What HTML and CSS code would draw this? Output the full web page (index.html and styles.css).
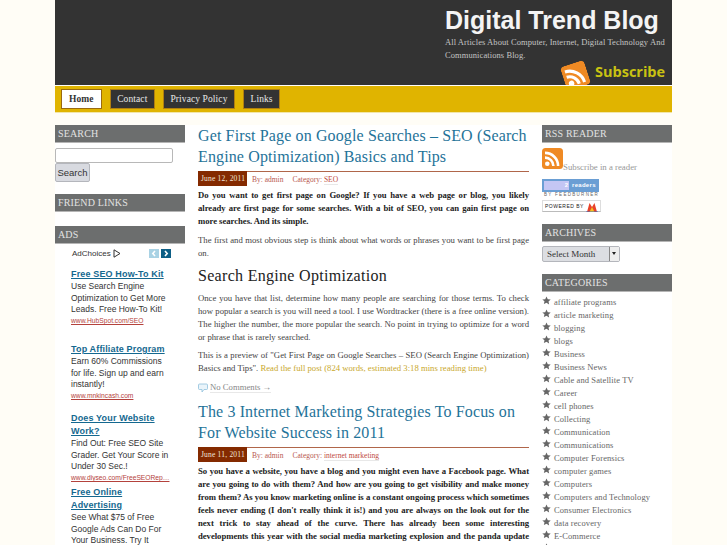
FILE: index.html
```html
<!DOCTYPE html>
<html lang="en">
<head>
<meta charset="utf-8">
<title>Digital Trend Blog</title>
<link rel="stylesheet" href="styles.css">
</head>
<body>
<svg class="defs" width="0" height="0" aria-hidden="true"><defs>
<symbol id="star" viewBox="0 0 12 12"><path d="M6 .6l1.7 3.600 3.900.5-2.900 2.700.8 3.900L6 8.900l-3.500 1.900.8-3.900L.4 4.700l3.900-.5z"/></symbol>
<symbol id="rss" viewBox="0 0 21 21"><rect width="21" height="21" rx="3.500" fill="#ef8a24"/><circle cx="5.300" cy="15.800" r="2.300" fill="#fff"/><path d="M3 9.600a8.400 8.400 0 0 1 8.400 8.400M3 4.900A13.100 13.100 0 0 1 16.100 18" fill="none" stroke="#fff" stroke-width="2.600"/></symbol>
</defs></svg>
<div class="page">
  <header class="masthead">
    <div class="brand">
      <h1 class="site-title">Digital Trend Blog</h1>
      <p class="tagline">All Articles About Computer, Internet, Digital Technology And Communications Blog.</p>
    </div>
    <div class="subscribe">
      <svg class="subscribe-icon" width="25" height="25"><use href="#rss"/></svg>
      <span class="subscribe-text">Subscribe</span>
    </div>
  </header>
  <nav class="nav">
    <a class="nav-item nav-active">Home</a>
    <a class="nav-item">Contact</a>
    <a class="nav-item">Privacy Policy</a>
    <a class="nav-item">Links</a>
  </nav>
  <div class="columns">
    <aside class="side">
      <h3 class="widget-title">SEARCH</h3>
      <div class="search">
        <input class="search-input" type="text" aria-label="Search">
        <button class="search-btn" type="button">Search</button>
      </div>
      <h3 class="widget-title friend">FRIEND LINKS</h3>
      <h3 class="widget-title ads-title">ADS</h3>
      <div class="ads">
        <div class="ad-head">
          <span class="adchoices">AdChoices</span>
          <svg class="ad-tri" width="8" height="9" viewBox="0 0 8 9"><path d="M1 .8l6 3.700-6 3.700z" fill="none" stroke="#333"/></svg>
          <span class="ad-arrows">
            <svg width="10" height="9" viewBox="0 0 10 9"><rect width="10" height="9" fill="#a9d2e4"/><path d="M6 2L3.800 4.500 6 7" fill="none" stroke="#fff" stroke-width="1.600"/></svg>
            <svg width="10" height="9" viewBox="0 0 10 9"><rect width="10" height="9" fill="#0d5f86"/><path d="M4 2l2.200 2.500L4 7" fill="none" stroke="#fff" stroke-width="1.600"/></svg>
          </span>
        </div>
        <div class="ad a1"><a class="ad-h">Free SEO How-To Kit</a><p class="ad-b">Use Search Engine Optimization to Get More Leads. Free How-To Kit!</p><a class="ad-u">www.HubSpot.com/SEO</a></div>
        <div class="ad a2"><a class="ad-h">Top Affiliate Program</a><p class="ad-b">Earn 60% Commissions for life. Sign up and earn instantly!</p><a class="ad-u">www.mnkincash.com</a></div>
        <div class="ad a3"><a class="ad-h">Does Your Website Work?</a><p class="ad-b">Find Out: Free SEO Site Grader. Get Your Score in Under 30 Sec.!</p><a class="ad-u">www.diyseo.com/FreeSEORep…</a></div>
        <div class="ad a4"><a class="ad-h">Free Online Advertising</a><p class="ad-b">See What $75 of Free Google Ads Can Do For Your Business. Try It</p></div>
      </div>
    </aside>
    <main class="main">
      <article class="post">
        <h2 class="post-title">Get First Page on Google Searches – SEO (Search Engine Optimization) Basics and Tips</h2>
        <div class="meta"><span class="date">June 12, 2011</span><span class="by">By: admin</span><span class="cat">Category: <a class="cat-link">SEO</a></span></div>
        <p class="para strong">Do you want to get first page on Google? If you have a web page or blog, you likely already are first page for some searches. With a bit of SEO, you can gain first page on more searches. And its simple.</p>
        <p class="para">The first and most obvious step is think about what words or phrases you want to be first page on.</p>
        <h3 class="sub">Search Engine Optimization</h3>
        <p class="para">Once you have that list, determine how many people are searching for those terms. To check how popular a search is you will need a tool. I use Wordtracker (there is a free online version). The higher the number, the more popular the search. No point in trying to optimize for a word or phrase that is rarely searched.</p>
        <p class="para">This is a preview of "Get First Page on Google Searches – SEO (Search Engine Optimization) Basics and Tips". <a class="more">Read the full post (824 words, estimated 3:18 mins reading time)</a></p>
        <div class="comments">
          <svg width="10" height="10" viewBox="0 0 10 10"><path d="M1.500 1h7a1 1 0 0 1 1 1v3.500a1 1 0 0 1-1 1H6L4 9V6.500H1.500a1 1 0 0 1-1-1V2a1 1 0 0 1 1-1z" fill="#eaf4fa" stroke="#8fc0dc" stroke-width=".8"/></svg>
          <a class="comment-link">No Comments →</a>
        </div>
      </article>
      <article class="post">
        <h2 class="post-title">The 3 Internet Marketing Strategies To Focus on For Website Success in 2011</h2>
        <div class="meta"><span class="date">June 11, 2011</span><span class="by">By: admin</span><span class="cat">Category: <a class="cat-link">internet marketing</a></span></div>
        <p class="para strong">So you have a website, you have a blog and you might even have a Facebook page. What are you going to do with them? And how are you going to get visibility and make money from them? As you know marketing online is a constant ongoing process which sometimes feels never ending (I don't really think it is!) and you are always on the look out for the next trick to stay ahead of the curve. There has already been some interesting developments this year with the social media marketing explosion and the panda update from Google which</p>
      </article>
    </main>
    <aside class="side">
      <h3 class="widget-title">RSS READER</h3>
      <div class="reader">
        <div class="reader-line"><svg width="21" height="21"><use href="#rss"/></svg><span class="reader-text">Subscribe in a reader</span></div>
        <div class="fb-count"><span class="fb-box">2</span><span class="fb-label">readers</span></div>
        <div class="fb-by">BY FEEDBURNER</div>
        <div class="powered"><span>POWERED BY</span>
          <svg width="12" height="11" viewBox="0 0 12 11"><path d="M1 11L3.500 2 6 6l2.500-4L11 11z" fill="#e8432a"/><path d="M3.500 11L6 6l2.500 5z" fill="#f4c21f"/><path d="M0 11h12" stroke="#3a6fc4"/></svg>
        </div>
      </div>
      <h3 class="widget-title">ARCHIVES</h3>
      <div class="archive"><span class="select"><span class="select-label">Select Month</span><span class="select-arrow"></span></span></div>
      <h3 class="widget-title">CATEGORIES</h3>
      <ul class="cats">
        <li><svg width="9" height="9"><use href="#star"/></svg>affiliate programs</li>
        <li><svg width="9" height="9"><use href="#star"/></svg>article marketing</li>
        <li><svg width="9" height="9"><use href="#star"/></svg>blogging</li>
        <li><svg width="9" height="9"><use href="#star"/></svg>blogs</li>
        <li><svg width="9" height="9"><use href="#star"/></svg>Business</li>
        <li><svg width="9" height="9"><use href="#star"/></svg>Business News</li>
        <li><svg width="9" height="9"><use href="#star"/></svg>Cable and Satellite TV</li>
        <li><svg width="9" height="9"><use href="#star"/></svg>Career</li>
        <li><svg width="9" height="9"><use href="#star"/></svg>cell phones</li>
        <li><svg width="9" height="9"><use href="#star"/></svg>Collecting</li>
        <li><svg width="9" height="9"><use href="#star"/></svg>Communication</li>
        <li><svg width="9" height="9"><use href="#star"/></svg>Communications</li>
        <li><svg width="9" height="9"><use href="#star"/></svg>Computer Forensics</li>
        <li><svg width="9" height="9"><use href="#star"/></svg>computer games</li>
        <li><svg width="9" height="9"><use href="#star"/></svg>Computers</li>
        <li><svg width="9" height="9"><use href="#star"/></svg>Computers and Technology</li>
        <li><svg width="9" height="9"><use href="#star"/></svg>Consumer Electronics</li>
        <li><svg width="9" height="9"><use href="#star"/></svg>data recovery</li>
        <li><svg width="9" height="9"><use href="#star"/></svg>E-Commerce</li>
        <li><svg width="9" height="9"><use href="#star"/></svg>Education</li>
      </ul>
    </aside>
  </div>
</div>
</body>
</html>
```
FILE: styles.css
```css
html, body { margin: 0; padding: 0; height: 100%; overflow: hidden; }
body { background: #fffdf6; font-family: "Liberation Serif", serif; color: #333; }
.defs { position: absolute; }
h1, h2, h3, p, ul { margin: 0; padding: 0; }
.page { width: 617px; margin-left: 55px; }

.masthead { position: relative; height: 85px; background: #333; overflow: hidden; }
.brand { margin-left: 390px; width: 226px; padding-top: 5px; }
.site-title { font: bold 25px/30px "Liberation Sans", sans-serif; color: #f4f4f4; white-space: nowrap; }
.tagline { font-size: 8.500px; line-height: 13px; color: #c4c4c4; letter-spacing: .08px; padding-top: 1px; }
.subscribe { position: absolute; left: 508px; top: 62px; display: flex; }
.subscribe-icon { transform: rotate(-18deg); flex: none; margin-top: 1px; }
.subscribe-text { font: bold 14.500px/20px "Open Sans", sans-serif; color: #c9c212; margin-left: 7px; }

.nav { box-sizing: border-box; height: 27px; margin-top: 1px; background: #e0b400; border-bottom: 1px solid #f2e6a8; display: flex; gap: 8px; align-items: center; padding-left: 6px; }
.nav-item { background: #333; color: #e8e8e8; border: 1px solid #b07f10; height: 18px; line-height: 18px; font-size: 9.500px; letter-spacing: .1px; padding: 0 6.500px; }
.nav-active { background: #fff; color: #333; font-weight: bold; border-color: #9a6a10; padding: 0 7px; }

.columns { margin-top: 12px; background: #fff; display: flex; gap: 13px; align-items: flex-start; height: 500px; }
.side { width: 130px; flex: none; }
.main { width: 331px; flex: none; }

.widget-title { background: #6c6e6e; border-bottom: 1px solid #b5b5b5; color: #e2e2e2; font-size: 10px; font-weight: normal; line-height: 17px; height: 17px; padding: 0 3px; letter-spacing: .15px; }
.search { padding-top: 5px; height: 46px; }
.search-input { display: block; box-sizing: border-box; width: 118px; height: 15px; margin: 0; padding: 0; border: 1px solid #b8b8b8; border-radius: 2px; background: #fff; }
.search-btn { display: block; box-sizing: border-box; width: 35px; height: 19px; padding: 0; border: 1px solid #b4b6bc; border-radius: 2px; background: #d8dae0; color: #333; font: 9.500px "Liberation Sans", sans-serif; }
.ads-title { margin-top: 14px; }

.ads { padding-left: 16px; font-family: "Liberation Sans", sans-serif; }
.ad-head { display: flex; align-items: center; height: 18px; width: 100px; padding-left: 1px; box-sizing: border-box; }
.adchoices { font-size: 8px; color: #333; }
.ad-tri { margin-left: 2px; }
.ad-arrows { display: flex; gap: 2px; margin-left: auto; }
.ad-h { display: block; font-weight: bold; font-size: 9px; line-height: 13px; color: #14688f; text-decoration: underline; letter-spacing: .15px; width: 100px; }
.ad-b { font-size: 8.500px; line-height: 11.670px; color: #333; width: 100px; }
.ad-u { display: block; font-size: 6.700px; line-height: 9px; color: #b4423c; text-decoration: underline; white-space: nowrap; }
.a1 { margin-top: 6px; }
.a2 { margin-top: 18px; }
.a3 { margin-top: 12px; }
.a4 { margin-top: 4px; }

.post-title { font-size: 16px; font-weight: normal; line-height: 21px; color: #1f7399; letter-spacing: .13px; }
.meta { display: flex; align-items: center; height: 14px; border-top: 1px solid #b0664a; margin-top: 4px; font-size: 7.500px; color: #b85a50; }
.date { background: #842a00; color: #f0e4d8; height: 15px; line-height: 15px; margin-top: -1px; padding: 0 3px; width: 43px; white-space: nowrap; letter-spacing: .2px; margin-right: 5px; }
.by { margin-right: 9px; }
.cat-link { color: #c04a40; border-bottom: 1px solid #e8e8e8; }
.para { font-size: 8.700px; line-height: 13px; color: #444; text-align: justify; margin-top: 5.500px; }
.strong { font-weight: bold; color: #222; margin-top: 3px; letter-spacing: -.042px; }
.sub { font-size: 16px; font-weight: normal; line-height: 20px; color: #222; letter-spacing: .3px; margin-top: 6.500px; }
.more { color: #c9a82c; }
.comments { display: flex; align-items: center; gap: 2px; margin-top: 6px; height: 13px; font-size: 8.700px; color: #888; }
.comment-link { border-bottom: 1px solid #e8e8e8; }
.post + .post { margin-top: 7px; }

.reader { padding-top: 5px; box-sizing: border-box; height: 81px; }
.reader-line { display: flex; align-items: flex-end; height: 21px; font-size: 8.800px; color: #999; }
.reader-text { line-height: 8px; margin-bottom: -2px; }
.fb-count { display: flex; width: 57px; height: 13px; margin-top: 10px; background: #6a9ed4; color: #fff; font: bold 6px/13px "Liberation Sans", sans-serif; align-items: center; }
.fb-box { background: #c4c6f4; width: 24px; height: 9px; line-height: 9px; margin-left: 2px; text-align: right; padding-right: 1px; margin-right: 3px; color: #fff; }
.fb-label { letter-spacing: .3px; }
.fb-by { font: 4.500px/6px "Liberation Sans", sans-serif; letter-spacing: 1.300px; color: #666; padding-left: 2px; }
.powered { display: flex; align-items: center; justify-content: space-between; box-sizing: border-box; width: 59px; height: 12px; margin-top: 2px; padding: 0 2px; border: 1px solid #ddd; border-bottom-color: #bbb; font: 5px "Liberation Sans", sans-serif; color: #222; letter-spacing: .5px; background: #fff; }
.archive { box-sizing: border-box; height: 32px; padding-top: 4px; }
.select { display: flex; width: 78px; height: 16px; box-sizing: border-box; border: 1px solid #b4b6bc; border-radius: 2px; background: #dcdee2; font-size: 9px; line-height: 14px; color: #333; }
.select-label { flex: 1; padding-left: 4px; }
.select-arrow { width: 9px; border-left: 1px solid #888; background: #eee; position: relative; }
.select-arrow::after { content: ""; position: absolute; left: 2px; top: 5px; border: 2.500px solid transparent; border-top: 3px solid #222; }
.cats { list-style: none; padding-top: 3px; }
.cats li { display: flex; align-items: center; height: 13px; font-size: 8.500px; color: #666; letter-spacing: .1px; white-space: nowrap; }
.cats svg { fill: #666; width: 9px; margin-right: 3px; margin-top: -3px; flex: none; }
```
